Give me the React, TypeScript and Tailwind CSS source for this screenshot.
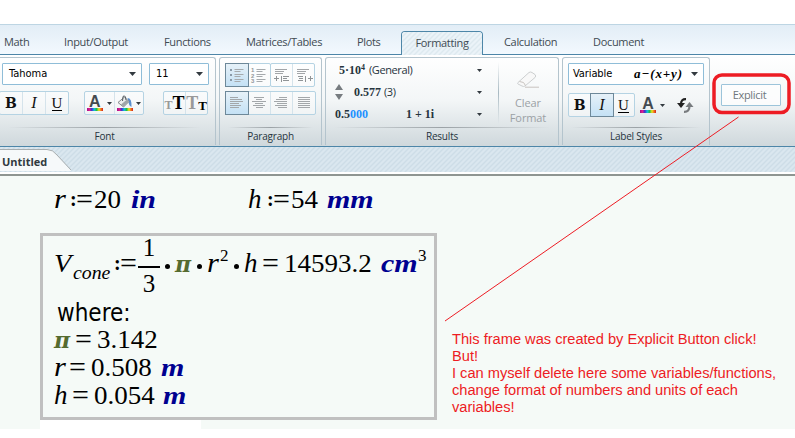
import type { ReactNode } from "react";
import { clsx } from "clsx";

const UI = "font-['Open_Sans','Noto_Sans',sans-serif]";
const SERIF = "font-['Liberation_Serif',serif]";

const tabs = [
    { name: "Math", cls: "ml-[4px] w-[60px]" },
    { name: "Input/Output", cls: "w-[100px]" },
    { name: "Functions", cls: "w-[82px]" },
    { name: "Matrices/Tables", cls: "w-[111px]" },
    { name: "Plots", cls: "w-[44px]" },
    { name: "Formatting", cls: "w-[82px]", active: true },
    { name: "Calculation", cls: "ml-[21px] w-[89px]" },
    { name: "Document", cls: "w-[80px]" },
];

function Caret({ small }: { small?: boolean }) {
    return (
        <svg className="shrink-0" width={small ? 5 : 7} height={small ? 3 : 4} viewBox="0 0 8 4" preserveAspectRatio="none">
            <path d="M0 0h8L4 4z" fill="#333a40" />
        </svg>
    );
}

function Hatch({ id, color, bg }: { id: string; color: string; bg: string }) {
    return (
        <svg className="absolute inset-0 h-full w-full">
            <defs>
                <pattern id={id} width="5" height="5" patternUnits="userSpaceOnUse">
                    <rect width="5" height="5" fill={bg} />
                    <path d="M-1 1L1 -1M0 5L5 0M4 6L6 4" stroke={color} strokeWidth="1.3" />
                </pattern>
            </defs>
            <rect width="100%" height="100%" fill={`url(#${id})`} />
        </svg>
    );
}

function Group({ label, className, children }: { label: string; className: string; children: ReactNode }) {
    return (
        <div className={clsx("flex h-[88px] shrink-0 flex-col rounded-t-[3px] border border-b-0 border-[#b4c4cd]", className)}>
            <div className="h-[69px]">{children}</div>
            <div className="mx-2 h-px bg-gradient-to-r from-transparent via-[#9ba2a6] to-transparent" />
            <div className="text-center text-[10px] leading-[16px] tracking-[-0.2px] text-[#26343d]">{label}</div>
        </div>
    );
}

function Buttons({ className, children }: { className: string; children: ReactNode }) {
    return (
        <div className={clsx("flex h-[24px] divide-x divide-[#d5e3eb] rounded-[2px] border border-[#b5d3e3] bg-white/40", className)}>
            {children}
        </div>
    );
}

function Cell({ on, className, children }: { on?: boolean; className?: string; children: ReactNode }) {
    return (
        <div className={clsx("flex flex-1 items-center justify-center", on && "-m-px border border-[#6d8899] bg-gradient-to-b from-[#e6f1f8] to-[#c4e1f5]", className)}>
            {children}
        </div>
    );
}

function Biu({ className, italicOn }: { className: string; italicOn?: boolean }) {
    return (
        <Buttons className={clsx(SERIF, "text-[16px] leading-none text-[#111]", className)}>
            <Cell><b className="font-['DejaVu_Serif',serif] text-[14px]">B</b></Cell>
            <Cell on={italicOn}><i>I</i></Cell>
            <Cell><span className="border-b border-black text-[15px] leading-[14px]">U</span></Cell>
        </Buttons>
    );
}

function Rainbow() {
    return <div className="h-[3px] w-[16px] bg-[linear-gradient(90deg,#a0108c,#e0208c_15%,#4030d0_30%,#10c0e0_45%,#20c040_60%,#f0e020_75%,#f07020_88%,#d02020)]" />;
}

function ColorA() {
    return (
        <div className="flex flex-col items-center">
            <span className="font-['Liberation_Sans',sans-serif] text-[16px] font-bold leading-[13px] text-[#444a50]">A</span>
            <Rainbow />
        </div>
    );
}

function Bucket() {
    return (
        <div className="flex flex-col items-center">
            <svg width="16" height="13" viewBox="0 0 16 13">
                <path d="M10.500 3q4.500 0 4 9-2.500-1-3-5z" fill="#5b8fce" />
                <path d="M1 7.500L7.500 2l4.500 4.500L6.500 12z" fill="#eceded" stroke="#777d80" strokeWidth=".9" />
                <path d="M4 9.500l6-5 2 2L6.500 12z" fill="#9fa5a8" />
                <path d="M5.500 6L6 1.500Q7.500 0 8.500 2l.5 3" fill="none" stroke="#555b60" />
            </svg>
            <Rainbow />
        </div>
    );
}

function Lines({ rows }: { rows: number[][] }) {
    return (
        <svg width="18" height="18" viewBox="0 0 18 18" shapeRendering="crispEdges">
            {rows.map(([x, y, w], i) => <rect key={i} x={x} y={y} width={w} height="1" fill="#a3a7aa" />)}
        </svg>
    );
}

const left = [[2, 3, 8], [2, 5, 12], [2, 7, 13], [2, 9, 9], [2, 11, 11], [2, 13, 9]];
const center = [[4, 3, 10], [6, 5, 6], [2, 7, 14], [5, 9, 8], [3, 11, 12], [6, 13, 7]];
const right = [[7, 3, 8], [4, 5, 11], [2, 7, 13], [5, 9, 10], [3, 11, 12], [6, 13, 9]];
const full = [[3, 3, 12], [3, 5, 12], [3, 7, 12], [3, 9, 12], [3, 11, 12], [3, 13, 12]];

function ListIcon({ numbered }: { numbered?: boolean }) {
    return (
        <svg width="18" height="18" viewBox="0 0 18 18">
            <path d="M6.500 3.500h9M6.500 5.500h6M6.500 8.500h9M6.500 10.500h6M6.500 13.500h9M6.500 15.500h6" stroke="#a6aaad" />
            {numbered ? (
                <g fill="#92979a" fontSize="6" fontWeight="700" fontFamily="Liberation Sans">
                    <text x="1" y="6">1</text>
                    <text x="1" y="11.500">2</text>
                    <text x="1" y="17">3</text>
                </g>
            ) : (
                <path d="M2 3h2v2H2zM2 8h2v2H2zM2 13h2v2H2z" fill="#8a9aa8" />
            )}
        </svg>
    );
}

function IndentIcon({ out }: { out?: boolean }) {
    return (
        <svg width="18" height="18" viewBox="0 0 18 18">
            <path d="M2 3.500h12M2 5.500h9M2 7.500h8" stroke="#a3a6a9" />
            {out
                ? <path d="M3 10.500h5M4 12.500h4M3 14.500h5M10.500 10v6M13 12.500h5M15.500 10v5" stroke="#909497" />
                : <path d="M1 12.500h5M3.500 10v5M8.500 10v6M10 10.500h6M10 12.500h4M10 14.500h6" stroke="#909497" />}
        </svg>
    );
}

function ResultRow({ children }: { children: ReactNode }) {
    return (
        <div className="flex h-[22px] items-center justify-between">
            <div className="flex items-center">{children}</div>
            <Caret small />
        </div>
    );
}

function Equals() {
    return <span className="relative top-[1px] w-[22px] text-[30px] leading-[20px]">=</span>;
}

function Assign() {
    return (
        <span className="flex w-[24px] items-baseline leading-[20px]">
            <b className="relative top-[-2px] w-[6px] text-[20px]">:</b>
            <span className="relative top-[1px] text-[30px]">=</span>
        </span>
    );
}

function Unit({ children, className }: { children: string; className?: string }) {
    return <b className={clsx("inline-block origin-left scale-x-[1.2] italic text-[#000090]", className)}>{children}</b>;
}

function Num({ children, className }: { children: string; className: string }) {
    return <span className={className}><span className="inline-block origin-left scale-x-[1.08]">{children}</span></span>;
}

function Var({ children, className }: { children: string; className: string }) {
    return <span className={className}><i className="inline-block origin-left scale-x-[1.13]">{children}</i></span>;
}

function Pi({ className }: { className: string }) {
    return <b className={clsx("font-['DejaVu_Serif',serif] text-[22px] italic leading-[20px] text-[#556b2f]", className)}>π</b>;
}

function Dot() {
    return <span className="mx-[5px] mb-[9px] size-[5px] shrink-0 self-end rounded-full bg-black" />;
}

function MathLine({ className, children }: { className: string; children: ReactNode }) {
    return (
        <div className={clsx("flex items-baseline whitespace-nowrap text-[25px] leading-[30px] text-black", SERIF, className)}>
            {children}
        </div>
    );
}

function Ribbon() {
    return (
        <div className="flex h-[92px] gap-[4px] border-b border-[#4d86a8] bg-gradient-to-b from-white via-[#f3f6f7] to-[#cfd8dc] pt-[2px]">
            <Group label="Font" className="w-[216px] rounded-l-none border-l-0 pr-[6px]">
                <div className="flex gap-[7px] pl-[2px] pt-[5px] font-['DejaVu_Sans_Condensed','DejaVu_Sans',sans-serif] text-[11px] text-black">
                    <div className="flex h-[22px] w-[140px] shrink-0 items-center justify-between rounded-[1px] border border-[#8fbdd8] bg-white pl-[6px] pr-[5px]">Tahoma<Caret /></div>
                    <div className="flex h-[22px] w-[60px] shrink-0 items-center justify-between rounded-[1px] border border-[#8fbdd8] bg-white pl-[6px] pr-[5px]">11<Caret /></div>
                </div>
                <div className="flex pt-[6px]">
                    <Biu className="-ml-px w-[70px] shrink-0" />
                    <Buttons className="ml-[15px] w-[60px] shrink-0">
                        <Cell className="gap-[4px]"><ColorA /><Caret small /></Cell>
                        <Cell className="gap-[3px]"><Bucket /><Caret small /></Cell>
                    </Buttons>
                    <Buttons className="ml-[19px] w-[45px] shrink-0 font-['Liberation_Serif',serif]">
                        <Cell className="text-black"><b className="pt-[4px] text-[12px] leading-none text-[#999]">T</b><b className="text-[18px] leading-none">T</b></Cell>
                        <Cell className="text-black"><b className="text-[18px] leading-none text-[#999]">T</b><b className="pt-[4px] text-[13px] leading-none">T</b></Cell>
                    </Buttons>
                </div>
            </Group>
            <Group label="Paragraph" className="-ml-px w-[103px]">
                <div className="flex flex-col gap-[4px] pl-[5px] pt-[5px]">
                    <div className="flex">
                        <Buttons className="w-[46px]"><Cell on><ListIcon /></Cell><Cell><ListIcon numbered /></Cell></Buttons>
                        <Buttons className="-ml-px w-[45px]"><Cell><IndentIcon /></Cell><Cell><IndentIcon out /></Cell></Buttons>
                    </div>
                    <Buttons className="w-[91px]">
                        <Cell on><Lines rows={left} /></Cell>
                        <Cell><Lines rows={center} /></Cell>
                        <Cell><Lines rows={right} /></Cell>
                        <Cell><Lines rows={full} /></Cell>
                    </Buttons>
                </div>
            </Group>
            <Group label="Results" className="-ml-px w-[234px]">
                <div className="flex pt-px">
                    <div className="w-[156px] pl-[9px] text-[11px] text-[#26343d]">
                        <ResultRow><span className="ml-[4px] font-['Liberation_Serif',serif] text-[12px] font-bold">5·10<sup className="text-[8px]">4</sup></span><span className="ml-[4px] tracking-[-0.4px]">(General)</span></ResultRow>
                        <ResultRow>
                            <svg width="8" height="16" viewBox="0 0 8 16"><path d="M0 6h8L4 0zM0 10h8l-4 6z" fill="#777c80" /></svg>
                            <b className="ml-[11px] font-['Liberation_Serif',serif] text-[12px]">0.577</b><span className="ml-[3px] tracking-[-0.4px]">(3)</span>
                        </ResultRow>
                        <ResultRow>
                            <b className="w-[71px] font-['Liberation_Serif',serif] text-[12px]">0.5<span className="text-[#1e90ff]">000</span></b>
                            <b className="font-['Liberation_Serif',serif] text-[12px]">1 + 1i</b>
                        </ResultRow>
                    </div>
                    <div className="ml-[16px] mt-[3px] h-[62px] w-px bg-gradient-to-b from-transparent via-[#a8b9c2] to-transparent" />
                    <div className="flex w-[58px] flex-col items-center pt-[12px] text-[11px] leading-[15px] tracking-[-0.1px] text-[#9ba1a5]">
                        <svg className="mb-[7px]" width="22" height="17" viewBox="0 0 22 17">
                            <path d="M1 11.500L12 1.500q1.500-1 3 0l3 2q1.500 1.500 0 3L8 15q-1.500 1-3 0l-4-2q-1-.5 0-1.500z" fill="#f8f8f8" stroke="#cccfd0" />
                            <path d="M2.500 10.500q5 0 6 4M8 16.200h14" fill="none" stroke="#c8c3bf" />
                        </svg>
                        <span>Clear</span><span>Format</span>
                    </div>
                </div>
            </Group>
            <Group label="Label Styles" className="-ml-px w-[148px]">
                <div className="pl-[5px] pt-[5px]">
                    <div className="flex h-[22px] w-[136px] items-center rounded-[1px] border border-[#8fbdd8] bg-white pl-[4px] pr-[5px] font-['DejaVu_Sans_Condensed','DejaVu_Sans',sans-serif] text-[11px] tracking-[-0.1px] text-black">
                        Variable
                        <b className="ml-auto font-['Liberation_Serif',serif] text-[13px] italic tracking-[0.9px]">a−(x+y)</b>
                        <span className="ml-[8px]"><Caret /></span>
                    </div>
                    <div className="flex items-center pt-[8px]">
                        <Biu className="w-[67px]" italicOn />
                        <div className="ml-[5px] flex items-center gap-[4px]"><ColorA /><Caret small /></div>
                        <svg className="ml-[12px]" width="17" height="15" viewBox="0 0 17 15">
                            <path d="M9 1.200Q4 1 4 6" fill="none" stroke="#222" strokeWidth="2.200" />
                            <path d="M0 5h8l-4 5z" fill="#222" />
                            <path d="M7 13.800Q12.500 14 12.500 8" fill="none" stroke="#777b7e" strokeWidth="2.200" />
                            <path d="M8.500 9h8l-4-5z" fill="#777b7e" />
                        </svg>
                    </div>
                </div>
            </Group>
            <div className="ml-[7px] mt-[27px] flex h-[22px] w-[60px] items-center justify-center rounded-[1px] border border-[#9cc4da] bg-white/70 pr-[3px] text-[11px] tracking-[-0.3px] text-[#6f777c]">Explicit</div>
        </div>
    );
}

function Worksheet() {
    return (
        <div className="relative h-[253px] bg-[#f5faf7]">
            <MathLine className="absolute left-[54px] top-[8px]">
                <Var className="w-[16px] text-[27px]">r</Var><Assign /><Num className="w-[37px]">20</Num><Unit>in</Unit>
            </MathLine>
            <MathLine className="absolute left-[248px] top-[8px]">
                <i className="w-[19px] text-[27px]">h</i><Assign /><Num className="w-[36px]">54</Num><Unit>mm</Unit>
            </MathLine>

            <div className="absolute left-[40px] top-[57px] h-[187px] w-[397px] border-[3px] border-[#c0c0c0] pl-[11px]">
                <MathLine className="mt-[12px] h-[30px]">
                    <Var className="w-[19px]">V</Var>
                    <span className="relative top-[7px] w-[41px] text-[18px]"><i className="inline-block origin-left scale-x-[1.1]">cone</i></span>
                    <Assign />
                    <div className="flex h-[54px] w-[22px] flex-col items-center self-center *:shrink-0">
                        <span className="h-[24px] leading-[24px]">1</span>
                        <span className="mt-[6px] h-[1.500px] w-full bg-black" />
                        <span className="mt-[4px] h-[24px] leading-[24px]">3</span>
                    </div>
                    <Dot />
                    <Pi className="w-[17px]" />
                    <Dot />
                    <Var className="w-[13px] text-[27px]">r</Var>
                    <span className="relative top-[-11px] w-[9px] text-[17px]">2</span>
                    <Dot />
                    <i className="w-[18px] text-[27px]">h</i><Equals />
                    <Num className="w-[97px]">14593.2</Num>
                    <Unit className="w-[37px]">cm</Unit>
                    <span className="relative top-[-11px] text-[17px]">3</span>
                </MathLine>
                <div className="mt-[20px] h-[27px] pl-[3px] font-['DejaVu_Sans_Condensed','DejaVu_Sans',sans-serif] text-[24px] leading-[30px] text-black">where:</div>
                <MathLine className="h-[27px]">
                    <Pi className="w-[21px]" /><Equals /><Num className="w-[70px]">3.142</Num>
                </MathLine>
                <MathLine className="h-[28px]">
                    <Var className="w-[15px] text-[27px]">r</Var><Equals /><Num className="w-[70px]">0.508</Num><Unit>m</Unit>
                </MathLine>
                <MathLine className="h-[27px]">
                    <i className="w-[18px] text-[27px]">h</i><Equals /><Num className="w-[69px]">0.054</Num><Unit>m</Unit>
                </MathLine>
            </div>

            <div className="absolute bottom-0 left-[40px] h-[9px] w-[161px] bg-white" />

            <div className="absolute left-[452px] top-[155px] whitespace-nowrap font-['Liberation_Sans',sans-serif] text-[14.667px] leading-[17px] tracking-[-0.02px] text-[#ed1c24]">
                <div>This frame was created by Explicit Button click!</div>
                <div>But!</div>
                <div>I can myself delete here some variables/functions,</div>
                <div>change format of numbers and units of each</div>
                <div>variables!</div>
            </div>
        </div>
    );
}

export default function App() {
    return (
        <div className={clsx("relative h-[438px] w-[795px] overflow-hidden bg-white pt-[24px]", UI)}>
            <nav className="flex h-[31px] items-end whitespace-nowrap border-b border-t border-b-[#4d86a8] border-t-[#bdd5e3] bg-gradient-to-b from-[#e2edf6] to-[#f3f9fe] text-[11px] leading-[24px] tracking-[-0.33px] text-[#404a52]">
                {tabs.map(t => (
                    <div
                        key={t.name}
                        className={clsx(
                            "shrink-0",
                            t.cls,
                            t.active && "relative -mb-px h-[24px] overflow-hidden rounded-t-[4px] border border-b-0 border-[#4d86a8] text-center leading-[21px]"
                        )}
                    >
                        {t.active && <Hatch id="tabHatch" color="#dde9ef" bg="#ebf3f8" />}
                        <span className="relative">{t.name}</span>
                    </div>
                ))}
            </nav>
            <Ribbon />
            <div className="relative h-[29px] border-b-2 border-[#8e9591]">
                <Hatch id="docHatch" color="#cddde7" bg="#dae7ef" />
                <svg className="absolute left-0 top-[2px]" width="76" height="22" viewBox="0 0 76 22">
                    <path d="M0 .5H47Q53 .5 57 6L71 21.500V22H0z" fill="#f6f9fa" />
                    <path d="M0 .5H47Q53 .5 57 6L71 21" fill="none" stroke="#a8aeb0" />
                </svg>
                <div className="relative h-[27px] border-b-2 border-white pl-[2px] pt-[2px] text-[11px] font-bold leading-[25px] text-[#303a40]">Untitled</div>
            </div>
            <Worksheet />

            {/* callout from the Explicit button down to the frame */}
            <svg className="pointer-events-none absolute inset-0" width="795" height="438">
                <rect x="714" y="75" width="75" height="37.500" rx="8" fill="none" stroke="#ed1c24" strokeWidth="3.500" />
                <path d="M738.500 117L445 321" stroke="#ed1c24" />
            </svg>
        </div>
    );
}
